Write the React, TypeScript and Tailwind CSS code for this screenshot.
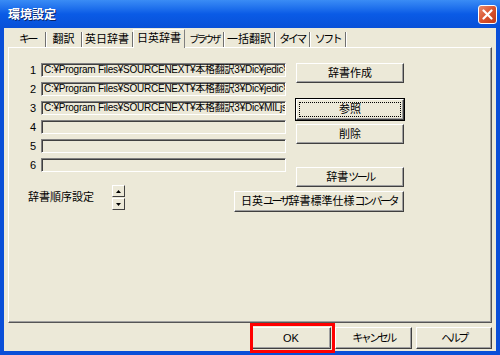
const FONT = "font-['Liberation_Sans','Noto_Sans_CJK_JP',sans-serif]";

// narrow katakana, close to the proportional UI font in the picture
function K({ children, tight = false }: { children: React.ReactNode; tight?: boolean }) {
  return <span className={tight ? "text-[10px] tracking-[-2.6px]" : "tracking-[-2.5px]"}>{children}</span>;
}

const tabs = [
  { label: <K>キー</K>, key: "k", w: "w-[36px]" },
  { label: "翻訳", key: "h", w: "w-[36px]" },
  { label: "英日辞書", key: "ej", w: "w-[51px]" },
  { label: "日英辞書", key: "je", w: "w-[52px]", active: true },
  { label: <K tight>ブラウザ</K>, key: "b", w: "w-[39px]" },
  { label: "一括翻訳", key: "i", w: "w-[51px]" },
  { label: <K>タイマ</K>, key: "t", w: "w-[35px]" },
  { label: <K>ソフト</K>, key: "s", w: "w-[36px]" },
];

const paths = [
  "C:¥Program Files¥SOURCENEXT¥本格翻訳3¥Dic¥jedic¥jedic.dic",
  "C:¥Program Files¥SOURCENEXT¥本格翻訳3¥Dic¥jedic¥jedic2.dic",
  "C:¥Program Files¥SOURCENEXT¥本格翻訳3¥Dic¥MILjs¥milj.dic",
  "",
  "",
  "",
];

function Btn({ children, className = "", focused = false }: { children: React.ReactNode; className?: string; focused?: boolean }) {
  return (
    <div
      className={`flex shrink-0 items-center justify-center bg-[#ECE9D8] text-[11px] text-black border border-t-white border-l-white border-r-[#404040] border-b-[#404040] shadow-[inset_-1px_-1px_0_#a0a0a0] ${focused ? "outline outline-1 outline-black" : ""} ${className}`}
    >
      {focused ? (
        <div className="flex h-[15px] w-[102px] items-center justify-center border border-dotted border-black">{children}</div>
      ) : (
        children
      )}
    </div>
  );
}

function SpinBtn({ up }: { up?: boolean }) {
  return (
    <div className="flex h-[12px] w-[13px] items-center justify-center border border-t-white border-l-white border-r-[#404040] border-b-[#404040] bg-[#ECE9D8]">
      <svg width="5" height="3" viewBox="0 0 5 3">
        <path d={up ? "M0 3 L2.5 0 L5 3 Z" : "M0 0 L2.5 3 L5 0 Z"} fill="black" />
      </svg>
    </div>
  );
}

export default function App() {
  return (
    <div className={`relative flex h-[355px] w-[500px] flex-col bg-[#0A4FD8] ${FONT}`}>
      {/* title bar */}
      <div className="flex h-[28px] items-center justify-between bg-gradient-to-b from-[#3A8CF5] via-[#0A5BE6] to-[#0850D8] pl-[8px] pr-[3px]">
        <span className="pt-[1px] text-[12px] font-bold text-white [text-shadow:1px_1px_0_#0a246a]">環境設定</span>
        <div className="flex h-[19px] w-[19px] items-center justify-center rounded-[3px] border border-white bg-gradient-to-br from-[#E88A6A] via-[#D9532E] to-[#C03A18]">
          <svg width="11" height="11" viewBox="0 0 11 11">
            <path d="M1.5 1.5 L9.5 9.5 M9.5 1.5 L1.5 9.5" stroke="white" strokeWidth="2.2" strokeLinecap="round" />
          </svg>
        </div>
      </div>

      {/* body */}
      <div className="mx-[4px] mb-[4px] flex flex-1 flex-col bg-[#ECE9D8] px-[4px] pt-[2px]">
        {/* tabs */}
        <div className="flex h-[17px] items-end pl-[2px]">
          {tabs.map((t) =>
            t.active ? (
              <div
                key={t.key}
                className={`relative z-10 -mb-px flex h-[19px] ${t.w} items-center justify-center border-l border-t border-r border-l-white border-t-white border-r-[#808080] bg-[#ECE9D8] pb-[2px] text-[11px] text-black`}
              >
                {t.label}
              </div>
            ) : (
              <div
                key={t.key}
                className={`flex h-[15px] ${t.w} items-center justify-center border-r border-r-[#707070] pb-[1px] text-[11px] text-black shadow-[1px_0_0_#fff]`}
              >
                {t.label}
              </div>
            ),
          )}
        </div>

        {/* panel */}
        <div className="flex h-[276px] flex-col border border-t-white border-l-white border-r-[#555] border-b-[#555] shadow-[inset_-1px_-1px_0_#a0a0a0]">
          <div className="flex pt-[15px]">
            {/* left column with fields */}
            <div className="flex w-[277px] shrink-0 flex-col pl-[21px]">
              <div className="flex flex-col gap-[5px]">
                {paths.map((p, i) => (
                  <div key={i} className="flex h-[14px] items-center gap-[4px]">
                    <span className="w-[7px] text-[11px] leading-none text-black">{i + 1}</span>
                    <div className="h-[14px] w-[245px] overflow-hidden whitespace-nowrap border border-t-[#808080] border-l-[#808080] border-r-white border-b-white bg-[#ECE9D8] pl-[2px] text-[10px] leading-[12px] tracking-[-0.25px] text-black shadow-[inset_1px_1px_0_#404040]">
                      {p}
                    </div>
                  </div>
                ))}
              </div>
              <div className="mt-[13px] flex items-center">
                <span className="-ml-[2px] w-[84px] text-[11px] text-black">辞書順序設定</span>
                <div className="flex flex-col gap-[1px]">
                  <SpinBtn up />
                  <SpinBtn />
                </div>
              </div>
            </div>

            {/* right column buttons */}
            <div className="flex min-w-0 flex-1 flex-col items-end pr-[87px]">
              <Btn className="h-[20px] w-[108px]">辞書作成</Btn>
              <Btn className="mt-[16px] h-[21px] w-[108px]" focused>参照</Btn>
              <Btn className="mt-[4px] h-[20px] w-[108px]">削除</Btn>
              <Btn className="mt-[23px] h-[20px] w-[108px]">辞書<K>ツール</K></Btn>
              <Btn className="mt-[4px] h-[21px] w-[170px]">
                日英<K>ユーザ</K>辞書標準仕様<K>コンバータ</K>
              </Btn>
            </div>
          </div>
        </div>

        {/* bottom buttons */}
        <div className="flex justify-end gap-[4px] pt-[4px]">
          <Btn className="h-[22px] w-[80px]">OK</Btn>
          <Btn className="h-[22px] w-[77px]"><K>キャンセル</K></Btn>
          <Btn className="h-[22px] w-[76px]"><K>ヘルプ</K></Btn>
        </div>
      </div>

      {/* highlight box around OK */}
      <div className="pointer-events-none absolute left-[250px] top-[323px] h-[30px] w-[85px] border-[3px] border-[#FF0000]" />
    </div>
  );
}
